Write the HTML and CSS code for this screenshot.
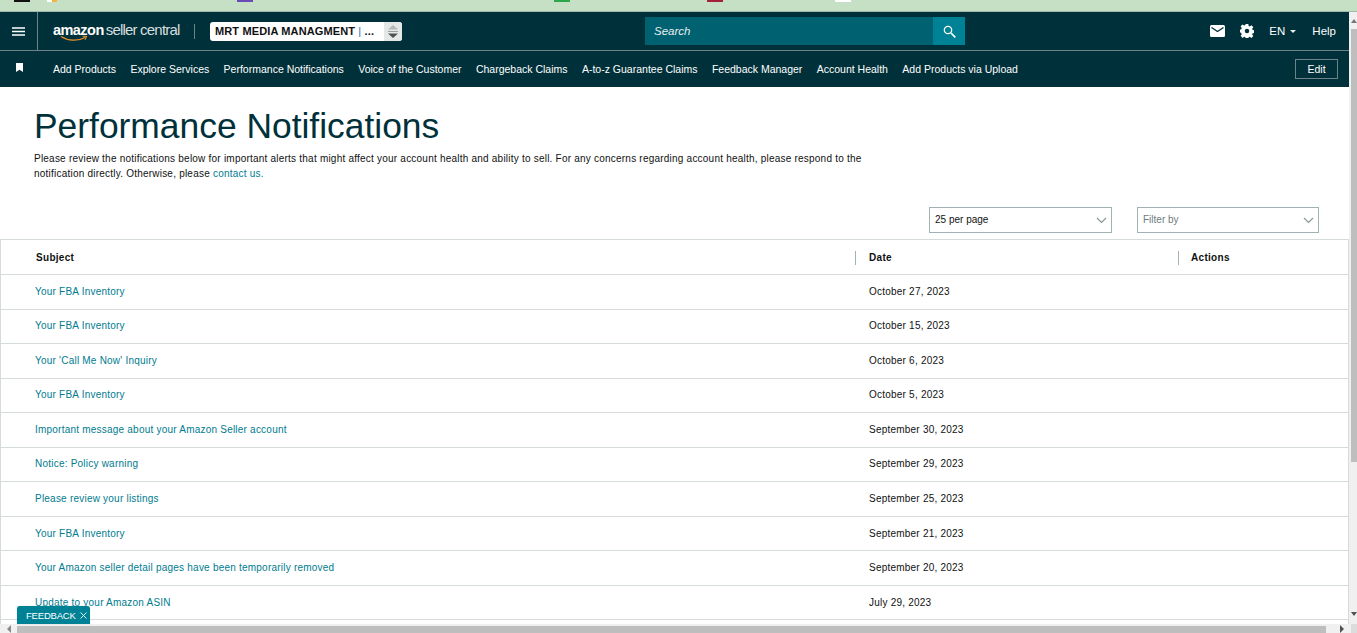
FILE: index.html
```html
<!DOCTYPE html>
<html lang="en">
<head>
  <meta charset="UTF-8" />
  <title>Performance Notifications</title>
  <link rel="stylesheet" href="styles.css">
</head>
<body>
  <!-- Browser bookmarks strip, cut off at the top -->
  <div class="browser-strip">
    <span class="tab-bit bit-black"></span>
    <span class="tab-bit bit-white"></span>
    <span class="tab-bit bit-purple"></span>
    <span class="tab-bit bit-green"></span>
    <span class="tab-bit bit-red"></span>
    <span class="tab-bit bit-pale"></span>
  </div>

  <div class="viewport">
    <div class="page">
      <header class="topbar">
        <div class="menu-cell">
          <svg width="13" height="9" viewBox="0 0 13 9"><path d="M0 1h13M0 4.500h13M0 8h13" stroke="#fff" stroke-width="1.300"/></svg>
        </div>
        <div class="brand">
          <span class="brand-amazon">amazon</span><span class="brand-central">seller central</span>
          <svg class="brand-smile" width="28" height="7" viewBox="0 0 28 7"><path d="M1 1.500C8 6 18 6.500 25 2.500" stroke="#e8912d" stroke-width="1.300" fill="none"/><path d="M22.500 1.200l4 .2-1.500 3.400" stroke="#e8912d" stroke-width="1.100" fill="none"/></svg>
        </div>
        <div class="account-picker">
          <span class="account-name">MRT MEDIA MANAGMENT <em>|</em> ...</span>
          <span class="account-arrows">
            <svg width="12" height="14" viewBox="0 0 12 14"><path d="M6 1l5 4.500H1z" fill="#b4b9b9"/><path d="M1 7.500h10" stroke="#9a9f9f"/><path d="M1 9.500h10l-5 4.500z" fill="#4b5252"/></svg>
          </span>
        </div>
        <div class="search">
          <span class="search-input">Search</span>
          <span class="search-btn">
            <svg width="13" height="13" viewBox="0 0 13 13"><circle cx="5" cy="5" r="3.700" stroke="#fff" stroke-width="1.300" fill="none"/><path d="M8 8l4.300 4.300" stroke="#fff" stroke-width="1.700"/></svg>
          </span>
        </div>
        <div class="top-actions">
          <svg class="mail" width="15" height="12" viewBox="0 0 15 12"><rect width="15" height="12" rx="1.500" fill="#fff"/><path d="M1.500 2.500l6 4 6-4" stroke="#00313a" stroke-width="1.400" fill="none"/></svg>
          <svg width="14" height="14" viewBox="0 0 16 16"><path d="M6.500 0h3l.4 2.200 1.300.6 1.900-1.300 2.100 2.100-1.300 1.900.6 1.300 2.200.4v3l-2.200.4-.6 1.300 1.300 1.900-2.100 2.100-1.900-1.300-1.300.6-.4 2.200h-3l-.4-2.200-1.300-.6-1.900 1.300L.7 13.500 2 11.600l-.6-1.300L0 9.500v-3l1.400-.4.600-1.300L.7 2.600 2.800.5l1.900 1.300 1.300-.6z" fill="#fff"/><circle cx="8" cy="8" r="2.600" fill="#00313a"/></svg>
          <span class="lang">EN<i class="caret"></i></span>
          <span class="help">Help</span>
        </div>
      </header>

      <nav class="subnav">
        <svg class="bookmark" width="7" height="9" viewBox="0 0 7 9"><path d="M0 0h7v9L3.500 6.800 0 9z" fill="#fff"/></svg>
        <a>Add Products</a>
        <a>Explore Services</a>
        <a>Performance Notifications</a>
        <a>Voice of the Customer</a>
        <a>Chargeback Claims</a>
        <a>A-to-z Guarantee Claims</a>
        <a>Feedback Manager</a>
        <a>Account Health</a>
        <a>Add Products via Upload</a>
        <button class="edit-btn">Edit</button>
      </nav>

      <main>
        <section class="intro">
          <h1>Performance Notifications</h1>
          <p>Please review the notifications below for important alerts that might affect your account health and ability to sell. For any concerns regarding account health, please respond to the notification directly. Otherwise, please <a>contact us.</a></p>
        </section>

        <div class="filters">
          <div class="dropdown per-page"><span>25 per page</span><svg width="11" height="7" viewBox="0 0 11 7"><path d="M1 1l4.500 4.500L10 1" stroke="#8b9698" stroke-width="1.200" fill="none"/></svg></div>
          <div class="dropdown filter-by"><span>Filter by</span><svg width="11" height="7" viewBox="0 0 11 7"><path d="M1 1l4.500 4.500L10 1" stroke="#8b9698" stroke-width="1.200" fill="none"/></svg></div>
        </div>

        <div class="table">
          <div class="row head">
            <div class="col-subject">Subject</div>
            <div class="col-date">Date</div>
            <div class="col-actions">Actions</div>
          </div>
          <div class="row"><div class="col-subject"><a>Your FBA Inventory</a></div><div class="col-date">October 27, 2023</div><div class="col-actions"></div></div>
          <div class="row"><div class="col-subject"><a>Your FBA Inventory</a></div><div class="col-date">October 15, 2023</div><div class="col-actions"></div></div>
          <div class="row"><div class="col-subject"><a>Your 'Call Me Now' Inquiry</a></div><div class="col-date">October 6, 2023</div><div class="col-actions"></div></div>
          <div class="row"><div class="col-subject"><a>Your FBA Inventory</a></div><div class="col-date">October 5, 2023</div><div class="col-actions"></div></div>
          <div class="row"><div class="col-subject"><a>Important message about your Amazon Seller account</a></div><div class="col-date">September 30, 2023</div><div class="col-actions"></div></div>
          <div class="row"><div class="col-subject"><a>Notice: Policy warning</a></div><div class="col-date">September 29, 2023</div><div class="col-actions"></div></div>
          <div class="row"><div class="col-subject"><a>Please review your listings</a></div><div class="col-date">September 25, 2023</div><div class="col-actions"></div></div>
          <div class="row"><div class="col-subject"><a>Your FBA Inventory</a></div><div class="col-date">September 21, 2023</div><div class="col-actions"></div></div>
          <div class="row"><div class="col-subject"><a>Your Amazon seller detail pages have been temporarily removed</a></div><div class="col-date">September 20, 2023</div><div class="col-actions"></div></div>
          <div class="row"><div class="col-subject"><a>Update to your Amazon ASIN</a></div><div class="col-date">July 29, 2023</div><div class="col-actions"></div></div>
          <div class="row"></div>
        </div>
      </main>
    </div>

    <!-- Browser scrollbars as they appear in the screenshot -->
    <div class="vscroll">
      <i class="arrow-up"></i>
      <span class="vthumb"></span>
      <i class="arrow-down"></i>
    </div>
  </div>

  <div class="hscroll">
    <i class="arrow-left"></i>
    <span class="hthumb"></span>
    <i class="arrow-right"></i>
    <span class="corner"></span>
  </div>

  <div class="feedback">FEEDBACK<svg width="7" height="7" viewBox="0 0 7 7"><path d="M.5.5l6 6M6.500.5l-6 6" stroke="#fff" stroke-width=".9"/></svg></div>
</body>
</html>
```

FILE: styles.css
```css
* {
  margin: 0;
  padding: 0;
  box-sizing: border-box;
}

html, body {
  height: 100%;
  overflow: hidden;
  font-family: 'Liberation Sans', Arial, sans-serif;
  color: #0f1111;
  background: #fff;
}

body {
  display: flex;
  flex-direction: column;
  position: relative;
}

a {
  color: #007b8f;
  text-decoration: none;
}

/* browser strip */
.browser-strip {
  height: 12px;
  flex: none;
  background: #c5e0c5;
  border-bottom: 1px solid #a3b8a8;
  position: relative;
}

.tab-bit {
  position: absolute;
  top: 0;
  width: 16px;
  height: 2px;
}

.bit-black { left: 14px; background: #111; }
.bit-white { left: 47px; width: 10px; background: linear-gradient(to right, #fff 50%, #f5b53a 50%); }
.bit-purple { left: 237px; background: #6a4bb5; }
.bit-green { left: 554px; background: #2ba84a; }
.bit-red { left: 707px; background: #a3213a; }
.bit-pale { left: 835px; background: #fff; }

/* page + scrollbars */
.viewport {
  flex: 1;
  display: flex;
  min-height: 0;
}

.page {
  flex: 1;
  min-width: 0;
  overflow: hidden;
}

.vscroll {
  width: 8px;
  flex: none;
  background: #f0f0f0;
  display: flex;
  flex-direction: column;
}

.vthumb {
  height: 433px;
  margin: 17px 0 0 2px;
  background: #bebebe;
}

.arrow-up {
  position: absolute;
  top: 19px;
  right: 0;
  border: 3px solid transparent;
  border-bottom: 4px solid #777;
  border-top: 0;
}

.arrow-down {
  position: absolute;
  bottom: 17px;
  right: 0;
  border: 3px solid transparent;
  border-top: 4px solid #505050;
  border-bottom: 0;
}

.hscroll {
  height: 9px;
  flex: none;
  background: #f0f0f0;
  display: flex;
  padding: 2px 31px 0 17px;
  position: relative;
}

.hthumb {
  flex: 1;
  background: #bebebe;
}

.corner {
  position: absolute;
  right: 0;
  top: 0;
  width: 6px;
  height: 9px;
  background: #dcdcdc;
}

.arrow-left {
  position: absolute;
  left: 7px;
  bottom: 0;
  border: 4px solid transparent;
  border-right: 4px solid #8a8a8a;
  border-left: 0;
}

.arrow-right {
  position: absolute;
  right: 13px;
  bottom: 0;
  border: 4px solid transparent;
  border-left: 4px solid #505050;
  border-right: 0;
}

/* top header */
.topbar {
  height: 39px;
  background: #00313a;
  border-bottom: 1px solid #6d8387;
  display: flex;
  align-items: center;
  color: #fff;
  position: relative;
}

.menu-cell {
  width: 38px;
  height: 100%;
  flex: none;
  display: flex;
  align-items: center;
  justify-content: center;
  border-right: 1px solid #6d8387;
}

.brand {
  width: 143px;
  margin-left: 15px;
  height: 100%;
  flex: none;
  position: relative;
  display: flex;
  align-items: center;
  white-space: nowrap;
  padding-bottom: 3px;
}

.brand-amazon {
  font-size: 14.500px;
  font-weight: 700;
  letter-spacing: -0.55px;
  margin-right: 2px;
}

.brand-central {
  font-size: 15px;
  color: #d7dedf;
  letter-spacing: -0.8px;
}

.brand-smile {
  position: absolute;
  left: 7px;
  top: 23px;
}

.account-picker {
  width: 192px;
  height: 19px;
  margin-left: 14px;
  background: #fff;
  border-radius: 3px;
  flex: none;
  display: flex;
  align-items: center;
  justify-content: space-between;
  position: relative;
  color: #0f1111;
  font-size: 11px;
  font-weight: 700;
  letter-spacing: 0.13px;
}

.account-picker::before {
  content: '';
  position: absolute;
  left: -16px;
  top: 2px;
  height: 15px;
  border-left: 1px solid #6d8387;
}

.account-name {
  padding-left: 5px;
  white-space: nowrap;
}

.account-name em {
  font-style: normal;
  font-weight: 400;
  color: #2a6fb5;
}

.account-arrows {
  width: 18px;
  height: 100%;
  background: #e6e8e8;
  border-radius: 0 3px 3px 0;
  display: flex;
  align-items: center;
  justify-content: center;
}

.search {
  position: absolute;
  left: 645px;
  top: 5px;
  width: 320px;
  height: 28px;
  display: flex;
  background: #006170;
}

.search-input {
  flex: 1;
  font-size: 11.500px;
  font-style: italic;
  padding-left: 9px;
  line-height: 28px;
  color: #e8f0f1;
}

.search-btn {
  width: 32px;
  background: #008296;
  display: flex;
  align-items: center;
  justify-content: center;
}

.top-actions {
  margin-left: auto;
  display: flex;
  align-items: center;
  padding-right: 13px;
  gap: 14px;
  font-size: 11.500px;
}

.mail {
  margin-right: 1px;
}

.lang {
  display: flex;
  align-items: center;
  gap: 4px;
  margin: 0 2px 0 1px;
}

.caret {
  border: 3px solid transparent;
  border-top: 3px solid #e7eced;
  border-bottom: 0;
  margin-left: 1px;
}

/* second row */
.subnav {
  height: 36px;
  background: #00313a;
  display: flex;
  align-items: center;
  padding-left: 16px;
  font-size: 10.500px;
}

.subnav a {
  color: #fff;
  margin-right: 14.400px;
  white-space: nowrap;
}

.bookmark {
  margin-right: 30px;
  margin-top: -3px;
}

.edit-btn {
  margin-left: auto;
  margin-right: 11px;
  width: 43px;
  height: 20px;
  background: transparent;
  border: 1px solid #6d8387;
  color: #fff;
  font: 10.500px 'Liberation Sans', Arial, sans-serif;
}

/* intro */
.intro {
  padding: 19px 0 0 34px;
}

h1 {
  font-size: 35.400px;
  font-weight: 400;
  color: #00313a;
  line-height: 40px;
}

.intro p {
  width: 835px;
  margin-top: 5px;
  font-size: 10px;
  line-height: 15px;
  letter-spacing: 0.22px;
}

/* filters */
.filters {
  display: flex;
  justify-content: flex-end;
  gap: 25px;
  padding-right: 30px;
  margin-top: 26px;
}

.dropdown {
  height: 26px;
  border: 1px solid #a2b1b3;
  font-size: 10px;
  display: flex;
  align-items: center;
  justify-content: space-between;
  padding: 0 4px 0 5px;
}

.dropdown span {
  margin-top: -1px;
}

.per-page { width: 183px; }
.filter-by { width: 182px; color: #6f7b7d; }

.dropdown svg {
  margin-top: 1px;
}

/* table */
.table {
  margin-top: 6px;
  border: 1px solid #d5dbdb;
  border-bottom: 0;
}

.row {
  display: flex;
  align-items: center;
  height: 34.550px;
  padding-bottom: 1.150px;
  border-bottom: 1px solid #d5dbdb;
  font-size: 10px;
  letter-spacing: 0.22px;
}

.head {
  height: 35px;
  padding-bottom: 0;
  font-weight: 700;
  letter-spacing: 0.3px;
}

.col-subject {
  width: 854px;
  flex: none;
  padding-left: 34px;
}

.head .col-subject { padding-left: 35px; }

.col-date {
  width: 323px;
  flex: none;
  padding-left: 14px;
}

.col-actions {
  flex: 1;
  padding-left: 13px;
}

.head .col-date,
.head .col-actions {
  position: relative;
}

.head .col-date::before,
.head .col-actions::before {
  content: '';
  position: absolute;
  left: 0;
  top: -1px;
  height: 14px;
  border-left: 1px solid #a2b1b3;
}

/* feedback tab */
.feedback {
  position: absolute;
  left: 17px;
  top: 606px;
  width: 73px;
  height: 18px;
  padding-left: 9px;
  background: #008296;
  border-radius: 3px 3px 0 0;
  color: #fff;
  font-size: 9.500px;
  display: flex;
  align-items: center;
  gap: 4px;
  letter-spacing: -0.2px;
  box-shadow: 0 0 1px #9fb7bb;
}
```
